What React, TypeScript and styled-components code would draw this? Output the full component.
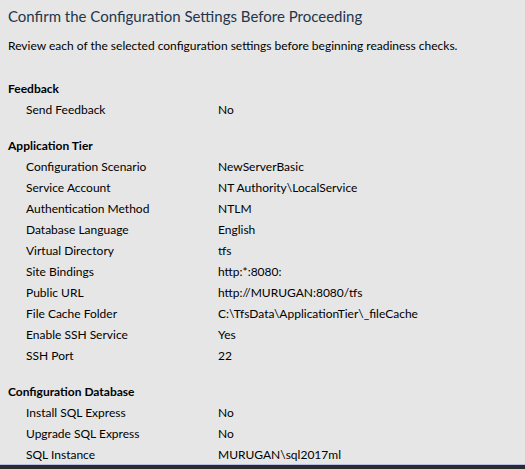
import React from 'react';
import styled, { createGlobalStyle } from 'styled-components';

const GlobalStyle = createGlobalStyle`
  html, body {
    margin: 0;
    padding: 0;
    background: #e6e6e6;
  }
  body {
    font-family: Lato, "Noto Sans", sans-serif;
    color: #000;
  }
`

const Page = styled.div`
  width: 525px;
  height: 469px;
  display: flex;
  flex-direction: column;
  background: #e6e6e6;
  overflow: hidden;
`

const Content = styled.div`
  flex: 1;
  padding: 3px 8px 0 8px;
  overflow: hidden;
`

const Title = styled.h1`
  margin: 0;
  font-size: 15px;
  font-weight: 400;
  line-height: 26px;
  color: #24354c;
`

const Description = styled.p`
  margin: 8px 0 0 0;
  font-size: 12px;
  line-height: 18px;
`

const Section = styled.section`
  margin-top: 15px;
  &:first-of-type {
    margin-top: 23px;
  }
`

const SectionTitle = styled.h2`
  margin: 0;
  font-size: 12px;
  font-weight: 700;
  line-height: 21px;
`

const Row = styled.div`
  display: grid;
  grid-template-columns: 192px 1fr;
  padding-left: 18px;
  font-size: 12px;
  line-height: 21px;
`

const Footer = styled.div`
  height: 4px;
  border-top: 1px solid #b9bde6;
  background: #2b2b2b;
`

type Setting = [string, string]

const sections: { title: string; rows: Setting[] }[] = [
  { title: 'Feedback', rows: [['Send Feedback', 'No']] },
  {
    title: 'Application Tier',
    rows: [
      ['Configuration Scenario', 'NewServerBasic'],
      ['Service Account', 'NT Authority\\LocalService'],
      ['Authentication Method', 'NTLM'],
      ['Database Language', 'English'],
      ['Virtual Directory', 'tfs'],
      ['Site Bindings', 'http:*:8080:'],
      ['Public URL', 'http://MURUGAN:8080/tfs'],
      ['File Cache Folder', 'C:\\TfsData\\ApplicationTier\\_fileCache'],
      ['Enable SSH Service', 'Yes'],
      ['SSH Port', '22'],
    ],
  },
  {
    title: 'Configuration Database',
    rows: [
      ['Install SQL Express', 'No'],
      ['Upgrade SQL Express', 'No'],
      ['SQL Instance', 'MURUGAN\\sql2017ml'],
    ],
  },
]

export default function App() {
  return (
    <>
      <GlobalStyle />
      <Page>
        <Content>
          <Title>Confirm the Configuration Settings Before Proceeding</Title>
          <Description>
            Review each of the selected configuration settings before beginning readiness checks.
          </Description>
          {sections.map((s) => (
            <Section key={s.title}>
              <SectionTitle>{s.title}</SectionTitle>
              {s.rows.map(([label, value]) => (
                <Row key={label}>
                  <span>{label}</span>
                  <span>{value}</span>
                </Row>
              ))}
            </Section>
          ))}
        </Content>
        <Footer />
      </Page>
    </>
  )
}
